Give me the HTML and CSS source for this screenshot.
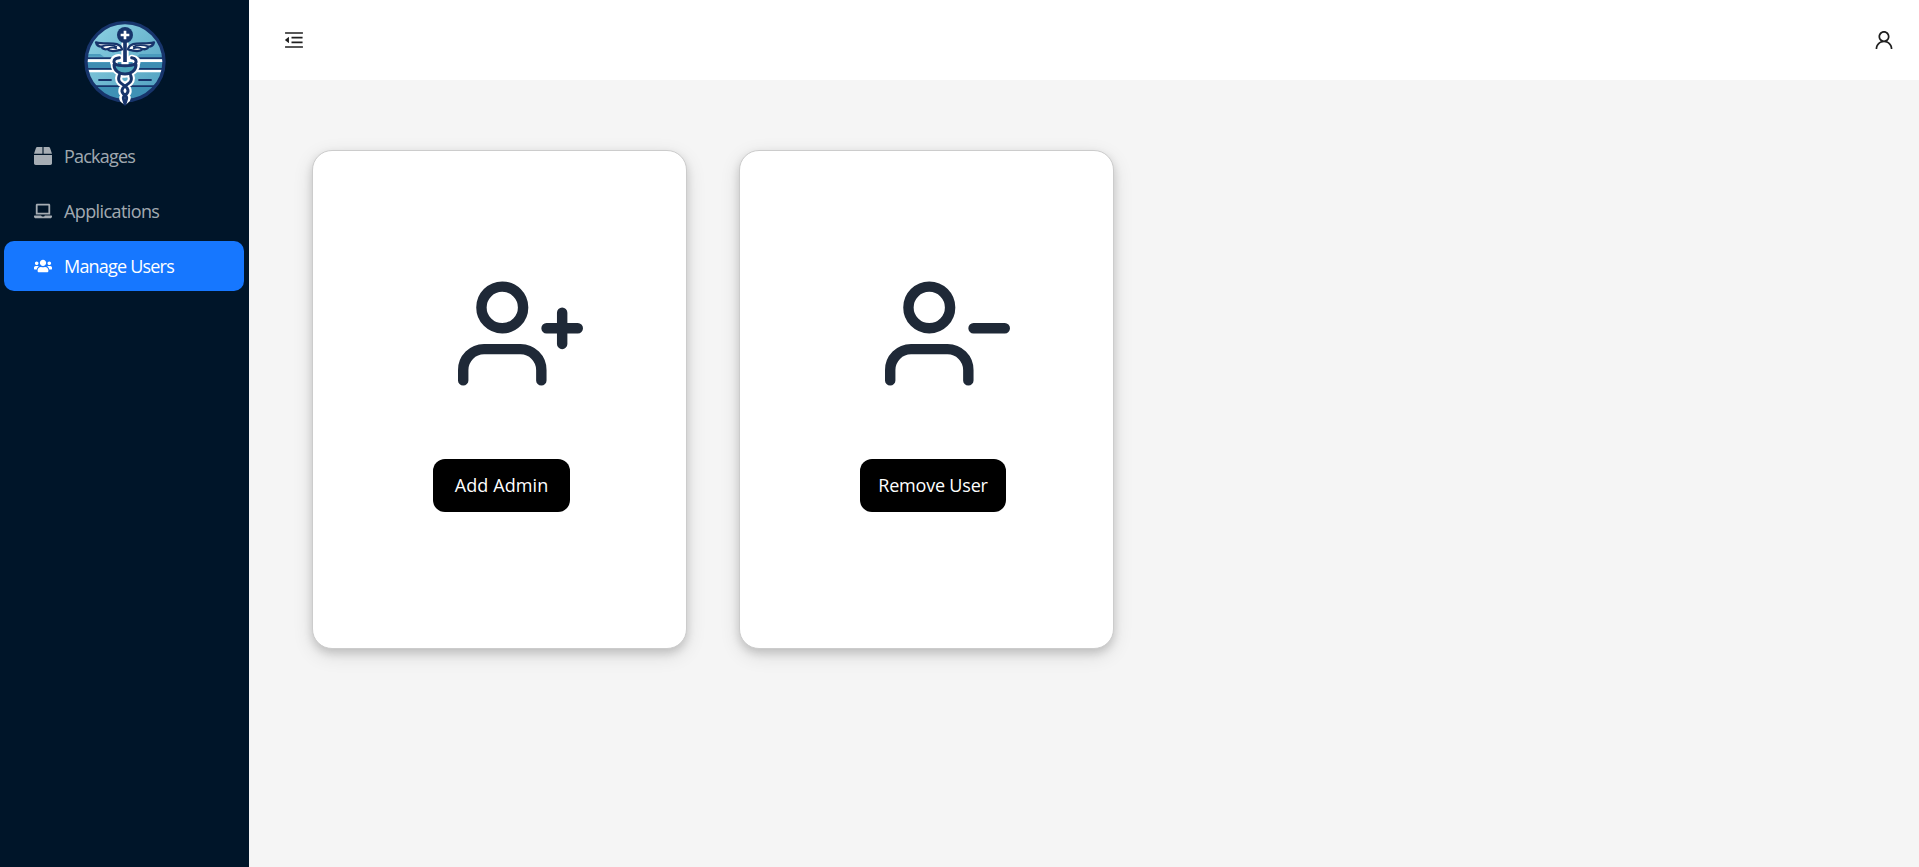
FILE: index.html
```html
<!DOCTYPE html>
<html lang="en">
<head>
<meta charset="utf-8">
<title>Manage Users</title>
<link rel="stylesheet" href="styles.css">
</head>
<body>
<div class="layout">
  <aside class="sidebar">
    <svg class="logo" viewBox="0 0 330 315">
      <defs>
        <linearGradient id="sky" x1="0" y1="0" x2="1" y2="1"><stop offset="0" stop-color="#8fd3e4"/><stop offset="1" stop-color="#4d9dbd"/></linearGradient>
        <clipPath id="disc"><circle cx="165" cy="155" r="114"/></clipPath>
      </defs>
      <circle cx="165" cy="155" r="116" fill="url(#sky)"/>
      <g clip-path="url(#disc)">
        <path d="M50 132h40l12 8h-50zM210 132h70v10h-82z" fill="#4a9bbd"/>
        <path d="M50 142h230v6H50z" fill="#17346b"/>
        <path d="M50 148h230v8H50zM50 179h230v8H50z" fill="#fff"/>
        <path d="M50 157h230v17H50z" fill="#3d8db2"/>
        <path d="M50 174h230v5H50z" fill="#17346b"/>
        <path d="M85 210h40M205 210h40" stroke="#17346b" stroke-width="6"/>
        <path d="M50 226h230v5H50z" fill="#17346b"/>
        <path d="M50 231h230v40H50z" fill="#3f91b5"/>
      </g>
      <circle cx="165" cy="155" r="117" fill="none" stroke="#17346b" stroke-width="10"/>
      <g fill="none" stroke="#fff" stroke-linecap="round" stroke-linejoin="round" stroke-width="22">
        <path d="M165 104v56M146 143c-16 2-17 12-13 18 0 18 14 31 32 31s34-13 34-31c4-8 0-14-13-16M148 196c-8 20 8 26 17 32s14 18 2 26-10 12-2 18M182 196c8 20-8 26-17 32s-14 18-2 26 10 12 2 18"/>
      </g>
      <g fill="#fff" stroke="#17346b" stroke-width="7" stroke-linejoin="round">
        <path d="M156 118c-7-27-46-13-78-21 2 10 9 13 17 13 2 7 10 9 17 7 9 11 28 6 44 1zM174 118c7-27 46-13 78-21-2 10-9 13-17 13-2 7-10 9-17 7-9 11-28 6-44 1z"/>
        <path d="M95 109c18-5 34-5 46 2M112 117c10-5 20-5 29-1M235 109c-18-5-34-5-46 2M218 117c-10-5-20-5-29-1" fill="none" stroke-width="5"/>
      </g>
      <path d="M165 90v66" stroke="#17346b" stroke-width="11"/>
      <circle cx="165" cy="75" r="24" fill="#17346b"/>
      <path d="M165 62v26M152 75h26" stroke="#fff" stroke-width="8"/>
      <path d="M134 164h64c-2 18-13 28-32 28s-30-10-32-28z" fill="#4da6bb"/>
      <g fill="none" stroke="#17346b" stroke-width="9" stroke-linecap="round">
        <path d="M148 143c-18 2-18 12-14 18 12 8 50 8 62 0 5-8 2-16-11-18M132 164c0 17 14 28 33 28s33-11 33-28M148 196c-8 20 8 26 17 32s14 18 2 26-6 12-2 28M182 196c8 20-8 26-17 32s-14 18-2 26 6 12 2 28"/>
      </g>
    </svg>
    <nav class="menu">
      <a class="item"><svg class="item-icon" viewBox="0 0 512 512"><path d="M509.500 184.600L458.900 32.800C452.400 13.200 434.100 0 413.400 0H272v192h238.700c-.4-2.500-.4-5-1.200-7.400zM240 0H98.600c-20.700 0-39 13.200-45.500 32.800L2.500 184.600c-.8 2.400-.8 4.900-1.200 7.400H240V0zM0 224v240c0 26.500 21.500 48 48 48h416c26.500 0 48-21.500 48-48V224H0z"/></svg><span class="t-packages">Packages</span></a>
      <a class="item"><svg class="item-icon" viewBox="0 0 640 512"><path d="M624 416H381.540c-.74 19.810-14.710 32-32.740 32H288c-18.690 0-33.020-17.470-32.770-32H16c-8.800 0-16 7.200-16 16v16c0 35.200 28.800 64 64 64h512c35.200 0 64-28.800 64-64v-16c0-8.800-7.200-16-16-16zM576 48c0-26.400-21.600-48-48-48H112C85.600 0 64 21.600 64 48v336h512V48zm-64 272H128V64h384v256z"/></svg><span class="t-applications">Applications</span></a>
      <a class="item selected"><svg class="item-icon" viewBox="0 0 640 512"><path d="M96 224c35.300 0 64-28.700 64-64s-28.700-64-64-64-64 28.700-64 64 28.700 64 64 64zm448 0c35.300 0 64-28.700 64-64s-28.700-64-64-64-64 28.700-64 64 28.700 64 64 64zm32 32h-64c-17.600 0-33.500 7.100-45.100 18.600 40.300 22.100 68.900 62 75.100 109.400h66c17.700 0 32-14.300 32-32v-32c0-35.300-28.700-64-64-64zm-256 0c61.900 0 112-50.100 112-112S381.900 32 320 32 208 82.100 208 144s50.100 112 112 112zm76.800 32h-8.300c-20.800 10-43.900 16-68.500 16s-47.600-6-68.500-16h-8.300C179.600 288 128 339.600 128 403.200V432c0 26.500 21.500 48 48 48h288c26.500 0 48-21.500 48-48v-28.800c0-63.600-51.600-115.200-115.200-115.200zm-223.700-13.400C161.500 263.100 145.600 256 128 256H64c-35.300 0-64 28.700-64 64v32c0 17.700 14.300 32 32 32h65.900c6.300-47.400 34.900-87.300 75.200-109.400z"/></svg><span class="t-users">Manage Users</span></a>
    </nav>
  </aside>
  <div class="main">
    <header class="header">
      <svg class="header-icon" viewBox="64 64 896 896"><path d="M408 442h480c4.400 0 8-3.600 8-8v-56c0-4.400-3.600-8-8-8H408c-4.400 0-8 3.600-8 8v56c0 4.400 3.600 8 8 8zm-8 204c0 4.400 3.600 8 8 8h480c4.400 0 8-3.600 8-8v-56c0-4.400-3.600-8-8-8H408c-4.400 0-8 3.600-8 8v56zm504-486H120c-4.400 0-8 3.600-8 8v56c0 4.400 3.600 8 8 8h784c4.400 0 8-3.600 8-8v-56c0-4.400-3.600-8-8-8zm0 632H120c-4.400 0-8 3.600-8 8v56c0 4.400 3.600 8 8 8h784c4.400 0 8-3.600 8-8v-56c0-4.400-3.600-8-8-8zM115.400 518.900L271.700 642c5.800 4.600 14.400.5 14.400-6.900V388.900c0-7.400-8.500-11.500-14.400-6.900L115.400 505.100a8.740 8.740 0 000 13.800z"/></svg>
      <svg class="header-icon" viewBox="64 64 896 896"><path d="M858.500 763.600a374 374 0 00-80.600-119.500 375.630 375.630 0 00-119.500-80.600c-.4-.2-.8-.3-1.200-.5C719.500 518 760 444.700 760 362c0-137-111-248-248-248S264 225 264 362c0 82.700 40.500 156 102.800 201.100-.4.200-.8.3-1.200.5-44.800 18.900-85 46-119.500 80.600a375.630 375.630 0 00-80.600 119.500A371.700 371.700 0 00136 901.800a8 8 0 008 8.200h60c4.400 0 7.900-3.500 8-7.800 2-77.200 33-149.500 87.800-204.300 56.700-56.700 132-87.900 212.200-87.900s155.500 31.200 212.200 87.900C779 752.700 810 825 812 902.200c.1 4.400 3.600 7.800 8 7.800h60a8 8 0 008-8.200c-1-47.800-10.900-94.300-29.500-138.200zM512 534c-45.900 0-89.100-17.900-121.600-50.400S340 407.900 340 362c0-45.900 17.900-89.100 50.400-121.600S466.100 190 512 190s89.100 17.900 121.600 50.400S684 316.100 684 362c0 45.900-17.900 89.100-50.400 121.600S557.900 534 512 534z"/></svg>
    </header>
    <main class="content">
      <section class="card">
        <svg class="card-icon" viewBox="0 0 24 24"><path d="M16 21v-2a4 4 0 0 0-4-4H5a4 4 0 0 0-4 4v2M20 8v6M23 11h-6"/><circle cx="8.500" cy="7" r="4"/></svg>
        <button class="button add"><span class="t-add">Add Admin</span></button>
      </section>
      <section class="card">
        <svg class="card-icon" viewBox="0 0 24 24"><path d="M16 21v-2a4 4 0 0 0-4-4H5a4 4 0 0 0-4 4v2M23 11h-6"/><circle cx="8.500" cy="7" r="4"/></svg>
        <button class="button remove"><span class="t-remove">Remove User</span></button>
      </section>
    </main>
  </div>
</div>
</body>
</html>
```

FILE: styles.css
```css
* { box-sizing: border-box; }
body { margin: 0; font-family: "Segoe UI", "Open Sans", "Noto Sans", sans-serif; font-size: 18px; }
.layout { display: flex; height: 867px; overflow: hidden; }
.sidebar { flex: none; width: 249px; background: #001529; display: flex; flex-direction: column; }
.logo { display: block; width: 110px; height: 105px; margin: 10px 0 0 70px; }
.menu { display: flex; flex-direction: column; gap: 5px; padding: 16px 5px 0 4px; }
.item { display: flex; align-items: center; gap: 12px; height: 50px; padding-left: 30px; border-radius: 10px; color: rgba(255, 255, 255, .65); white-space: nowrap; }
.selected { background: #1677ff; color: #fff; }
.item-icon { width: 18px; height: 18px; fill: currentColor; }
.t-packages { letter-spacing: -.8px; }
.t-applications { letter-spacing: -.6px; }
.t-users { letter-spacing: -.8px; }
.main { flex: 1; background: #f5f5f5; }
.header { display: flex; justify-content: space-between; height: 80px; padding: 30px 25px 0 35px; background: #fff; }
.header-icon { width: 20px; height: 20px; fill: rgba(0, 0, 0, .88); }
.content { display: flex; gap: 52px; padding: 70px 63px; }
.card { display: flex; flex-direction: column; align-items: flex-start; width: 375px; height: 499px; padding: 119.600px 0 0 120px; background: #fff; border: 1px solid #ccc; border-radius: 20px; box-shadow: 0 4px 8px rgba(0, 0, 0, .14), 0 6px 20px rgba(0, 0, 0, .12); }
.card-icon { width: 125px; height: 125px; margin-left: 25px; fill: none; stroke: #1f2937; stroke-width: 2; stroke-linecap: round; stroke-linejoin: round; }
.button { height: 53px; margin-top: 63.400px; padding: 0 0 1px; border: 0; border-radius: 12px; background: #000; color: #fff; font: inherit; white-space: nowrap; }
.add { width: 137px; letter-spacing: .1px; }
.remove { width: 146px; letter-spacing: -.2px; }
```
